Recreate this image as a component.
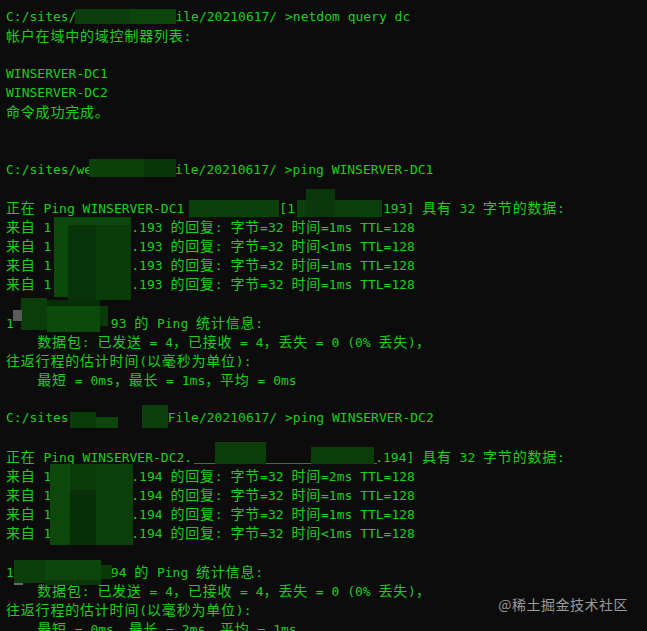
const CJK = /([\u2e80-\u9fff\u3000-\u303f\uff00-\uffef]+)/;

// null = blank line, number = hidden span width in px
const LINES = [
  ['C:/sites/', 99, 'ile/20210617/ >netdom query dc'],
  ['帐户在域中的域控制器列表:'],
  null,
  ['WINSERVER-DC1'],
  ['WINSERVER-DC2'],
  ['命令成功完成。'],
  null,
  null,
  ['C:/sites/we', 83, 'ile/20210617/ >ping WINSERVER-DC1'],
  null,
  ['正在 Ping WINSERVER-DC1', 95, '[1', 88, '193] 具有 32 字节的数据:'],
  ['来自 1', 80, '.193 的回复: 字节=32 时间=1ms TTL=128'],
  ['来自 1', 80, '.193 的回复: 字节=32 时间<1ms TTL=128'],
  ['来自 1', 80, '.193 的回复: 字节=32 时间=1ms TTL=128'],
  ['来自 1', 80, '.193 的回复: 字节=32 时间=1ms TTL=128'],
  null,
  ['1', 97, '93 的 Ping 统计信息:'],
  ['    数据包: 已发送 = 4，已接收 = 4，丢失 = 0 (0% 丢失)，'],
  ['往返行程的估计时间(以毫秒为单位):'],
  ['    最短 = 0ms，最长 = 1ms，平均 = 0ms'],
  null,
  ['C:/sites', 99, 'File/20210617/ >ping WINSERVER-DC2'],
  null,
  ['正在 Ping WINSERVER-DC2.', 183, '.194] 具有 32 字节的数据:'],
  ['来自 1', 80, '.194 的回复: 字节=32 时间=2ms TTL=128'],
  ['来自 1', 80, '.194 的回复: 字节=32 时间=1ms TTL=128'],
  ['来自 1', 80, '.194 的回复: 字节=32 时间=1ms TTL=128'],
  ['来自 1', 80, '.194 的回复: 字节=32 时间<1ms TTL=128'],
  null,
  ['1', 97, '94 的 Ping 统计信息:'],
  ['    数据包: 已发送 = 4，已接收 = 4，丢失 = 0 (0% 丢失)，'],
  ['往返行程的估计时间(以毫秒为单位):'],
  ['    最短 = 0ms，最长 = 2ms，平均 = 1ms'],
];

// mosaic blocks drawn over the hidden parts
const BLOCKS = [
  [75, 9, 55, 15, '#0b3c0b'], [130, 9, 46, 15, '#0c450c'],
  [89, 159, 55, 18, '#0b400b'], [144, 159, 32, 18, '#093509'],
  [189, 200, 90, 17, '#0b3f0b'],
  [297, 200, 85, 17, '#0b3f0b'], [306, 189, 29, 28, '#0a380a'],
  [54, 217, 77, 8, '#0c470c'], [54, 225, 14, 72, '#0c4a0c'], [68, 225, 28, 75, '#093409'], [96, 225, 35, 75, '#0a3c0a'],
  [21, 298, 26, 32, '#0b3d0b'], [47, 300, 53, 6, '#082e08'], [47, 306, 53, 26, '#0c4a0c'], [100, 306, 8, 20, '#0a3a0a'],
  [13, 310, 9, 11, '#5b5b5b'],
  [70, 412, 26, 16, '#0a3c0a'], [96, 417, 22, 11, '#0c460c'], [142, 405, 26, 23, '#0b3f0b'],
  [194, 463, 183, 1, '#3f6f3f'],
  [215, 442, 51, 22, '#0b3e0b'], [311, 447, 63, 17, '#0b3e0b'],
  [50, 464, 20, 81, '#0c470c'], [70, 464, 26, 26, '#0a3c0a'], [70, 490, 26, 55, '#082f08'], [96, 464, 37, 81, '#0b3f0b'],
  [14, 560, 31, 23, '#0b3e0b'], [45, 560, 56, 20, '#0c460c'], [45, 580, 56, 5, '#0a380a'], [101, 565, 11, 14, '#0a3a0a'],
  [14, 583, 9, 2, '#6a6a6a'],
];

function Text({ s }) {
  return s.split(CJK).map((part, i) =>
    i % 2 ? (
      <span key={i} className="font-['Noto_Sans_CJK_SC',sans-serif] text-[14px] tracking-[0.8px]">{part}</span>
    ) : (
      part
    )
  );
}

export default function App() {
  return (
    <div className="relative w-[647px] h-[631px] overflow-hidden bg-[#0c0c0c]">
      <div className="pl-[6px] pt-[6.5px] font-['DejaVu_Sans_Mono','Noto_Sans_CJK_SC',monospace] text-[13px] leading-[19.15px] text-[#1ccf1c] whitespace-pre">
        {LINES.map((line, i) => (
          <div key={i} className="h-[19.15px]">
            {line
              ? line.map((seg, j) =>
                  typeof seg === 'number' ? (
                    <span key={j} className="inline-block" style={{ width: seg }} />
                  ) : (
                    <Text key={j} s={seg} />
                  )
                )
              : ' '}
          </div>
        ))}
      </div>

      {BLOCKS.map(([x, y, w, h, c], i) => (
        <div key={i} className="absolute" style={{ left: x, top: y, width: w, height: h, background: c }} />
      ))}

      <div className="absolute right-[19px] top-[594px] font-['Noto_Sans_CJK_SC',sans-serif] text-[14px] tracking-[0.5px] text-[#9a9a9a]">
        @稀土掘金技术社区
      </div>
    </div>
  );
}
